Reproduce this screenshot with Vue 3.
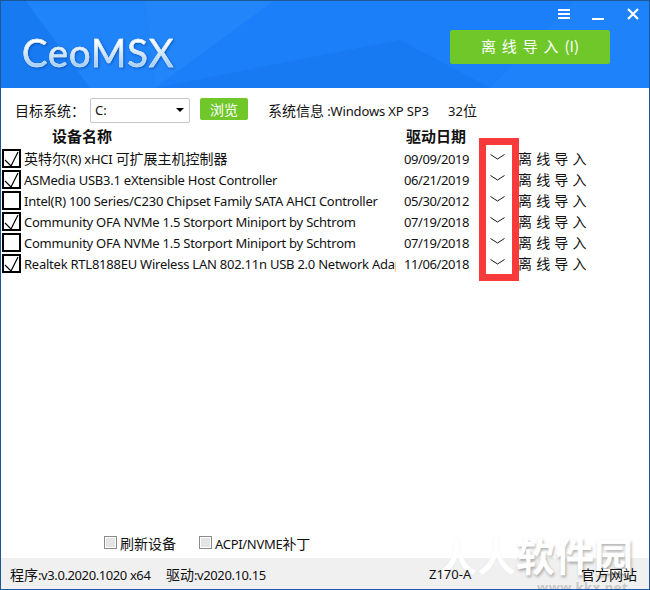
<script setup>
const devices = [
    { name: '英特尔(R) xHCI 可扩展主机控制器', date: '09/09/2019', checked: true },
    { name: 'ASMedia USB3.1 eXtensible Host Controller', date: '06/21/2019', checked: true },
    { name: 'Intel(R) 100 Series/C230 Chipset Family SATA AHCI Controller', date: '05/30/2012', checked: false },
    { name: 'Community OFA NVMe 1.5 Storport Miniport by Schtrom', date: '07/19/2018', checked: true },
    { name: 'Community OFA NVMe 1.5 Storport Miniport by Schtrom', date: '07/19/2018', checked: false },
    { name: 'Realtek RTL8188EU Wireless LAN 802.11n USB 2.0 Network Adapter', date: '11/06/2018', checked: true },
];

// chinese runs are a size bigger than the latin ones, as in the original
function runs(text) {
    return text.split(/([\u4e00-\u9fff]+)/).filter(Boolean).map(t => ({
        text: t,
        zh: /[\u4e00-\u9fff]/.test(t),
    }));
}
</script>

<template>
    <div class="window">
        <header class="header">
            <svg class="facets" width="650" height="88" viewBox="0 0 650 88">
                <polygon points="0,0 25,0 90,88 0,88" fill="#0f6fe0" opacity=".3" />
                <polygon points="25,0 145,0 155,88 90,88" fill="#2a8dff" opacity=".3" />
                <polygon points="145,0 275,0 155,88" fill="#3b97ff" opacity=".25" />
                <polygon points="400,40 490,88 155,88" fill="#0f6fe6" opacity=".3" />
                <polygon points="575,0 650,0 650,88 490,88" fill="#2a8dff" opacity=".25" />
            </svg>
            <div class="logo">CeoMSX</div>
            <div class="controls">
                <span class="menu-icon"><i></i><i></i><i></i></span>
                <span class="min-icon"></span>
                <svg class="close-icon" width="12" height="12" viewBox="0 0 12 12">
                    <path d="M1 1L11 11M11 1L1 11" stroke="#fff" stroke-width="2.2" fill="none" />
                </svg>
            </div>
            <button class="import-btn">离 线 导 入 (I)</button>
        </header>

        <div class="toolbar">
            <span class="target-label">目标系统：</span>
            <div class="select">
                <span>C:</span>
                <i class="select-arrow"></i>
            </div>
            <button class="browse-btn">浏览</button>
            <span class="sys-info"><span class="zh">系统信息</span> :Windows XP SP3</span>
            <span class="sys-bits">32<span class="zh">位</span></span>
        </div>

        <div class="table-head">
            <span class="head-name">设备名称</span>
            <span class="head-date">驱动日期</span>
        </div>
        <div class="rows">
            <div v-for="(d, i) in devices" :key="i" class="row">
                <span class="check">
                    <svg v-if="d.checked" width="15" height="15" viewBox="0 0 15 15">
                        <path d="M1 9L7 15L14 1" stroke="#000" stroke-width="1.2" fill="none" />
                    </svg>
                </span>
                <span class="name"><span v-for="(r, j) in runs(d.name)" :key="j" :class="{ zh: r.zh }">{{ r.text }}</span></span>
                <span class="date">{{ d.date }}</span>
                <span class="chevron">
                    <svg width="15" height="6" viewBox="0 0 15 6">
                        <path d="M0.5 0.5L7.5 5L14.5 0.5" stroke="#1a1a1a" stroke-width="1" fill="none" />
                    </svg>
                </span>
                <span class="action">离 线 导 入</span>
            </div>
        </div>

        <div class="options">
            <label class="opt"><i class="opt-box"></i><span class="zh">刷新设备</span></label>
            <label class="opt opt-acpi"><i class="opt-box"></i><span>ACPI/NVME<span class="zh">补丁</span></span></label>
        </div>

        <div class="watermark">
            <span class="wm-title"><span class="wm-light">人人</span><span class="wm-dark">软件园</span></span>
            <span class="wm-url">www.kkx.net</span>
        </div>

        <footer class="footer">
            <span class="ver"><span class="zh">程序</span>:v3.0.2020.1020 x64</span>
            <span class="drv"><span class="zh">驱动</span>:v2020.10.15</span>
            <span class="board">Z170-A</span>
            <span class="site zh">官方网站</span>
        </footer>

        <div class="highlight"></div>
    </div>
</template>

<style>
html, body {
    margin: 0;
    background: #fff;
}
</style>

<style scoped>
.window {
    position: relative;
    box-sizing: border-box;
    width: 650px;
    height: 590px;
    display: flex;
    flex-direction: column;
    overflow: hidden;
    border: 1px solid #1c5896;
    background: #fff;
    color: #111;
    font-family: "Noto Sans", "Noto Sans CJK SC", sans-serif;
    font-size: 13px;
}
.zh {
    font-family: "Noto Sans CJK SC", sans-serif;
    font-size: 14px;
    letter-spacing: 0;
}
.header {
    position: relative;
    flex: none;
    height: 87px;
    margin: 0 -1px;
    background: #1a7ff8;
}
.facets {
    position: absolute;
    left: 0;
    top: -1px;
}
.logo {
    position: absolute;
    left: 22px;
    top: 29px;
    font-family: "Lato", sans-serif;
    font-size: 38px;
    line-height: 44px;
    letter-spacing: 1px;
    background: linear-gradient(#ffffff 25%, #a9d0f5 80%);
    -webkit-background-clip: text;
    background-clip: text;
    color: transparent;
    -webkit-text-stroke: .5px #d4e7fb;
    filter: drop-shadow(1px 1px 1px rgba(0, 50, 130, .5));
}
.controls {
    position: absolute;
    top: 7px;
    right: 11px;
    display: flex;
    align-items: center;
}
.menu-icon {
    display: flex;
    flex-direction: column;
    gap: 2px;
    width: 12px;
    margin-right: 22px;
}
.menu-icon i {
    display: block;
    height: 2px;
    background: #fff;
}
.min-icon {
    width: 12px;
    height: 2px;
    margin: 10px 23px 0 0;
    background: #fff;
}
.import-btn {
    position: absolute;
    left: 450px;
    top: 29px;
    width: 160px;
    height: 34px;
    border: 0;
    border-radius: 2px;
    padding: 0 0 3px;
    background: #6fc72a;
    color: #fff;
    font-family: "Noto Sans CJK SC", sans-serif;
    font-size: 15px;
    word-spacing: 2.5px;
}
.toolbar {
    display: flex;
    align-items: center;
    height: 24px;
    margin-top: 10px;
    padding-left: 14px;
    flex: none;
}
.target-label {
    width: 75px;
    font-family: "Noto Sans CJK SC", sans-serif;
    font-size: 14px;
}
.select {
    box-sizing: border-box;
    display: flex;
    align-items: center;
    justify-content: space-between;
    width: 100px;
    height: 25px;
    padding: 0 5px 0 4px;
    border: 1px solid #c4c4cc;
    border-radius: 2px;
}
.select-arrow {
    width: 0;
    height: 0;
    border: 4px solid transparent;
    border-top: 4px solid #000;
    border-bottom: 0;
}
.browse-btn {
    width: 48px;
    height: 22px;
    margin: -2px 0 0 10px;
    border: 0;
    border-radius: 2px;
    padding: 0;
    background: #6fc72a;
    color: #fff;
    font-family: "Noto Sans CJK SC", sans-serif;
    font-size: 14px;
}
.sys-info {
    margin-left: 20px;
    width: 180px;
    white-space: nowrap;
    letter-spacing: -.15px;
}
.table-head {
    display: flex;
    flex: none;
    height: 20px;
    margin-top: 4px;
    font-family: "Noto Sans CJK SC", sans-serif;
    font-size: 15px;
    font-weight: 700;
    line-height: 20px;
}
.head-name {
    margin-left: 51px;
    width: 354px;
}
.rows {
    display: flex;
    flex-direction: column;
    margin-top: 2px;
    padding-left: 1px;
}
.row {
    display: grid;
    grid-template-columns: 22px 372px 82px 40px auto;
    align-items: center;
    height: 21px;
}
.check {
    box-sizing: border-box;
    width: 19px;
    height: 19px;
    border: 2px solid #000;
    display: flex;
}
.name {
    overflow: hidden;
    white-space: nowrap;
    line-height: 20px;
    letter-spacing: -.24px;
}
.name .zh {
    line-height: 16px;
}
.date {
    padding-left: 8px;
    letter-spacing: -.4px;
}
.chevron {
    display: flex;
    padding: 0 0 4px 12px;
}
.action {
    padding-bottom: 2px;
    font-family: "Noto Sans CJK SC", sans-serif;
    font-size: 14px;
    line-height: 18px;
    word-spacing: 1px;
    white-space: nowrap;
}
.options {
    display: flex;
    margin-top: auto;
    padding-left: 103px;
    height: 29px;
    align-items: center;
    gap: 22px;
    padding-bottom: 2px;
    box-sizing: border-box;
}
.opt {
    display: flex;
    align-items: center;
    gap: 3px;
}
.opt-acpi {
    margin-left: 1px;
    letter-spacing: -.3px;
}
.opt-box {
    box-sizing: border-box;
    width: 13px;
    height: 13px;
    border: 1px solid #8a8a8a;
    background: #e4e4e4;
    box-shadow: inset 0 0 0 1px #fff;
}
.footer {
    display: flex;
    align-items: center;
    flex: none;
    height: 31px;
    padding-left: 9px;
    white-space: nowrap;
    background: #f0f0f0;
}
.ver {
    position: relative;
    z-index: 2;
    width: 156px;
    letter-spacing: -.4px;
}
.drv {
    width: 263px;
    letter-spacing: -.4px;
}
.board {
    position: relative;
    z-index: 2;
    width: 152px;
}
.site {
    position: relative;
    z-index: 2;
}
.watermark {
    position: absolute;
    left: 437px;
    top: 528px;
    width: 208px;
    height: 60px;
    z-index: 1;
    pointer-events: none;
}
.wm-title {
    display: block;
    font-family: "Noto Sans CJK SC", sans-serif;
    font-size: 39px;
    line-height: 50px;
    font-weight: 700;
    white-space: nowrap;
}
.wm-light {
    color: #fff;
    text-shadow: 0 0 2px rgba(0, 0, 0, .06);
}
.wm-dark {
    color: #fff;
    text-shadow: 1px 2px 3px rgba(0, 0, 0, .3);
}
.wm-url {
    position: absolute;
    left: 99px;
    top: 53px;
    font-size: 13px;
    line-height: 10px;
    font-weight: 700;
    letter-spacing: .5px;
    color: #c8c8c8;
}
.highlight {
    position: absolute;
    left: 478px;
    top: 137px;
    box-sizing: border-box;
    width: 40px;
    height: 143px;
    border: 7px solid #f83a3a;
}
</style>
